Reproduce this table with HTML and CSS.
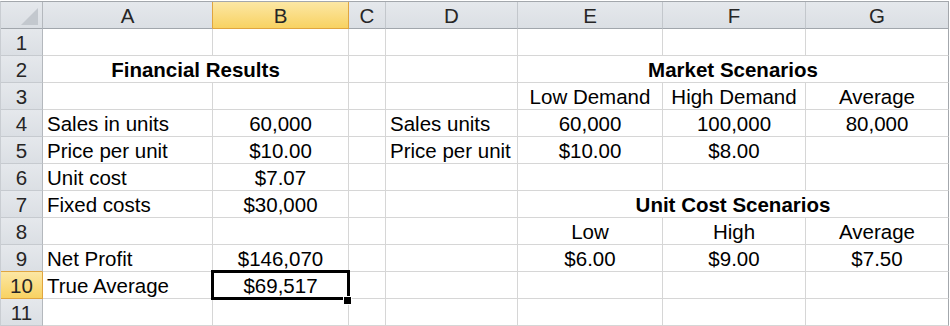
FILE: index.html
```html
<!DOCTYPE html>
<html>
<head>
<meta charset="utf-8">
<link rel="stylesheet" href="styles.css">
</head>
<body>
<div class="sheet">
  <!-- header row -->
  <div class="ch corner"><svg width="41" height="26" viewBox="0 0 41 26"><polygon points="37,6 37,23 20,23" fill="#c3c8ce"/></svg></div>
  <div class="ch pre-sel">A</div>
  <div class="ch sel">B</div>
  <div class="ch">C</div>
  <div class="ch">D</div>
  <div class="ch">E</div>
  <div class="ch">F</div>
  <div class="ch last">G</div>

  <!-- row 1 -->
  <div class="rh">1</div>
  <div class="c"></div><div class="c"></div><div class="c"></div><div class="c"></div><div class="c"></div><div class="c"></div><div class="c last"></div>

  <!-- row 2 -->
  <div class="rh">2</div>
  <div class="c span2 bold ctr">Financial Results</div>
  <div class="c"></div><div class="c"></div>
  <div class="c span3 bold ctr last">Market Scenarios</div>

  <!-- row 3 -->
  <div class="rh">3</div>
  <div class="c"></div><div class="c"></div><div class="c"></div><div class="c"></div>
  <div class="c ctr">Low Demand</div>
  <div class="c ctr">High Demand</div>
  <div class="c ctr last">Average</div>

  <!-- row 4 -->
  <div class="rh">4</div>
  <div class="c">Sales in units</div>
  <div class="c ctr">60,000</div>
  <div class="c"></div>
  <div class="c">Sales units</div>
  <div class="c ctr">60,000</div>
  <div class="c ctr">100,000</div>
  <div class="c ctr last">80,000</div>

  <!-- row 5 -->
  <div class="rh">5</div>
  <div class="c">Price per unit</div>
  <div class="c ctr">$10.00</div>
  <div class="c"></div>
  <div class="c">Price per unit</div>
  <div class="c ctr">$10.00</div>
  <div class="c ctr">$8.00</div>
  <div class="c last"></div>

  <!-- row 6 -->
  <div class="rh">6</div>
  <div class="c">Unit cost</div>
  <div class="c ctr">$7.07</div>
  <div class="c"></div><div class="c"></div><div class="c"></div><div class="c"></div><div class="c last"></div>

  <!-- row 7 -->
  <div class="rh">7</div>
  <div class="c">Fixed costs</div>
  <div class="c ctr">$30,000</div>
  <div class="c"></div><div class="c"></div>
  <div class="c span3 bold ctr last">Unit Cost Scenarios</div>

  <!-- row 8 -->
  <div class="rh">8</div>
  <div class="c"></div><div class="c"></div><div class="c"></div><div class="c"></div>
  <div class="c ctr">Low</div>
  <div class="c ctr">High</div>
  <div class="c ctr last">Average</div>

  <!-- row 9 -->
  <div class="rh pre-selrow">9</div>
  <div class="c">Net Profit</div>
  <div class="c ctr">$146,070</div>
  <div class="c"></div><div class="c"></div>
  <div class="c ctr">$6.00</div>
  <div class="c ctr">$9.00</div>
  <div class="c ctr last">$7.50</div>

  <!-- row 10 -->
  <div class="rh selrow">10</div>
  <div class="c">True Average</div>
  <div class="c ctr active">$69,517</div>
  <div class="c"></div><div class="c"></div><div class="c"></div><div class="c"></div><div class="c last"></div>

  <!-- row 11 -->
  <div class="rh">11</div>
  <div class="c"></div><div class="c"></div><div class="c"></div><div class="c"></div><div class="c"></div><div class="c"></div><div class="c last"></div>
</div>
</body>
</html>
```

FILE: styles.css
```css
* { box-sizing: border-box; }

html, body {
  margin: 0;
  padding: 0;
  background: #ffffff;
}

body {
  font-family: "Liberation Sans", Arial, sans-serif;
  font-size: 20.5px;
  color: #000;
  overflow: hidden;
}

.sheet {
  margin-top: 1px;
  width: 949px;
  display: grid;
  grid-template-columns: 42px 170px 136px 37px 132px 145px 143px 143px;
  grid-auto-rows: 27px;
  border-top: 1px solid #a3a7ac;
  border-left: 1px solid #c9cdd2;
}

.ch,
.rh {
  background: linear-gradient(#e5e8ec, #dbdfe4);
  color: #262626;
  display: flex;
  align-items: center;
  justify-content: center;
  line-height: 26px;
  padding-top: 1px;
}

.ch {
  border-right: 1px solid #c3c7cc;
  border-bottom: 1px solid #a1a6ac;
}

.ch.corner {
  border-right: 1px solid #b4b8bd;
  padding: 0;
  align-items: stretch;
  justify-content: stretch;
}

.ch.corner svg { display: block; }

.ch.last { border-right: 1px solid #a3a7ac; }

.ch.pre-sel { border-right-color: #e0a53f; }

.ch.sel {
  background: linear-gradient(#fce7a4, #f8d262);
  border-right-color: #e0a53f;
  border-bottom-color: #e0a53f;
}

.rh {
  border-right: 1px solid #b4b8bd;
  border-bottom: 1px solid #c6cacf;
}

.rh.pre-selrow { border-bottom-color: #e0a53f; }

.rh.selrow {
  background: linear-gradient(#fce7a4, #f8d262);
  border-right-color: #e0a53f;
  border-bottom-color: #e0a53f;
}

.c {
  border-right: 1px solid #d6d6d6;
  border-bottom: 1px solid #d6d6d6;
  line-height: 26px;
  padding: 1px 0 0 4px;
  white-space: nowrap;
}

.c.last { border-right: 1px solid #a3a7ac; }

.ctr {
  text-align: center;
  padding-left: 0;
}

.bold { font-weight: bold; }

.span2 { grid-column: span 2; }
.span3 { grid-column: span 3; }

.active { position: relative; }

.active::after {
  content: "";
  position: absolute;
  left: -2px;
  top: -2px;
  right: -2px;
  bottom: -2px;
  border: 3px solid #000;
  pointer-events: none;
}

.active::before {
  content: "";
  position: absolute;
  right: -4px;
  bottom: -7px;
  width: 7px;
  height: 7px;
  background: #000;
  border: 1px solid #fff;
  z-index: 2;
}
```
